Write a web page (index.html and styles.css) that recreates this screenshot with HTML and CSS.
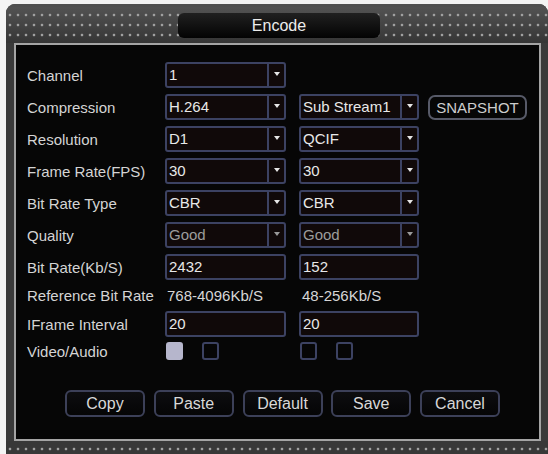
FILE: index.html
```html
<!DOCTYPE html>
<html>
<head>
<meta charset="utf-8">
<link rel="stylesheet" href="styles.css">
</head>
<body>
<div class="frame">
  <div class="header">
    <div class="tab">Encode</div>
  </div>
  <div class="panel">
    <div class="row">
      <div class="label">Channel</div>
      <div class="select c1"><span class="val">1</span><span class="arrow"></span></div>
    </div>
    <div class="row">
      <div class="label">Compression</div>
      <div class="select c1"><span class="val">H.264</span><span class="arrow"></span></div>
      <div class="select c2"><span class="val">Sub Stream1</span><span class="arrow"></span></div>
      <div class="snap">SNAPSHOT</div>
    </div>
    <div class="row">
      <div class="label">Resolution</div>
      <div class="select c1"><span class="val">D1</span><span class="arrow"></span></div>
      <div class="select c2"><span class="val">QCIF</span><span class="arrow"></span></div>
    </div>
    <div class="row">
      <div class="label">Frame Rate(FPS)</div>
      <div class="select c1"><span class="val">30</span><span class="arrow"></span></div>
      <div class="select c2"><span class="val">30</span><span class="arrow"></span></div>
    </div>
    <div class="row">
      <div class="label">Bit Rate Type</div>
      <div class="select c1"><span class="val">CBR</span><span class="arrow"></span></div>
      <div class="select c2"><span class="val">CBR</span><span class="arrow"></span></div>
    </div>
    <div class="row">
      <div class="label">Quality</div>
      <div class="select c1 disabled"><span class="val">Good</span><span class="arrow"></span></div>
      <div class="select c2 disabled"><span class="val">Good</span><span class="arrow"></span></div>
    </div>
    <div class="row">
      <div class="label">Bit Rate(Kb/S)</div>
      <div class="input c1">2432</div>
      <div class="input c2">152</div>
    </div>
    <div class="row ref">
      <div class="label">Reference Bit Rate</div>
      <div class="text c1">768-4096Kb/S</div>
      <div class="text c2">48-256Kb/S</div>
    </div>
    <div class="row">
      <div class="label">IFrame Interval</div>
      <div class="input c1">20</div>
      <div class="input c2">20</div>
    </div>
    <div class="row checks">
      <div class="label">Video/Audio</div>
      <div class="pair c1"><span class="cb on"></span><span class="cb"></span></div>
      <div class="pair c2"><span class="cb"></span><span class="cb"></span></div>
    </div>
    <div class="buttons">
      <div class="btn">Copy</div>
      <div class="btn">Paste</div>
      <div class="btn">Default</div>
      <div class="btn">Save</div>
      <div class="btn">Cancel</div>
    </div>
  </div>
  <div class="footer"></div>
</div>
</body>
</html>
```
FILE: styles.css
```css
html, body {
  margin: 0;
  padding: 0;
  background: #f4f4f4;
  font-family: "Liberation Sans", Arial, sans-serif;
}

.frame {
  margin: 4px 0 0 6px;
  width: 542px;
  height: 450px;
  box-sizing: border-box;
  background: #3a3a3a;
  border-radius: 9px 9px 0 0;
  padding: 0 7px 0 8px;
  display: flex;
  flex-direction: column;
  overflow: hidden;
}

.header {
  height: 39px;
  flex: none;
  margin: 0 -7px 0 -8px;
  display: flex;
  justify-content: center;
  align-items: flex-start;
  background:
    linear-gradient(#505050 0 3px, transparent 3px),
    radial-gradient(circle, #a0a0a0 1px, transparent 1.7px) 0 6px / 8px 10px,
    linear-gradient(#555555, #353535);
}

.tab {
  margin-top: 9px;
  margin-left: 4px;
  width: 202px;
  height: 25px;
  border-radius: 6px;
  background: linear-gradient(#202020, #030303);
  color: #ececec;
  font-size: 16px;
  line-height: 25px;
  text-align: center;
}

.panel {
  flex: 1;
  border: 2px solid #a4a4a4;
  background: #060606;
  padding: 17px 0 0 11px;
}

.footer {
  height: 13px;
  flex: none;
  margin: 0 -7px 0 -8px;
  background:
    radial-gradient(circle, #a0a0a0 1px, transparent 1.7px) 0 3px / 8px 10px,
    #383838;
}

.row {
  display: flex;
  align-items: center;
  height: 26px;
  margin-bottom: 6px;
}

.row.ref {
  height: 19px;
}

.row.checks {
  height: 18px;
  margin-top: -1px;
}

.label {
  width: 138px;
  flex: none;
  color: #d4d4d4;
  font-size: 15px;
  white-space: nowrap;
}

.c1 {
  width: 121px;
  flex: none;
}

.c2 {
  width: 120px;
  flex: none;
  margin-left: 13px;
}

.select, .input {
  height: 26px;
  box-sizing: border-box;
  border: 2px solid #3c4262;
  border-radius: 3px;
  background: #100909;
  color: #e8e8e8;
  font-size: 15px;
  display: flex;
}

.input {
  line-height: 22px;
  padding-left: 2px;
}

.select .val {
  flex: 1;
  line-height: 22px;
  padding-left: 2px;
  white-space: nowrap;
  overflow: hidden;
}

.select .arrow {
  width: 15px;
  flex: none;
  border-left: 2px solid #3c4262;
  display: flex;
  align-items: center;
  justify-content: center;
}

.select .arrow::after {
  content: "";
  border-left: 3.5px solid transparent;
  border-right: 3.5px solid transparent;
  border-top: 4px solid #e6e6e6;
  margin-top: -2px;
}

.select.disabled {
  color: #9c9c9c;
}

.select.disabled .arrow::after {
  border-top-color: #9a9a9a;
}

.text {
  color: #d6d6d6;
  font-size: 15px;
  padding-left: 2px;
  white-space: nowrap;
}

.text.c2 {
  padding-left: 1px;
}

.pair {
  display: flex;
  align-items: center;
  height: 18px;
}

.cb {
  width: 17px;
  height: 18px;
  box-sizing: border-box;
  border: 2px solid #3c4262;
  border-radius: 3px;
  margin-left: 19px;
}

.cb:first-child {
  margin-left: 1px;
}

.cb.on {
  background: #b6b6cc;
  border-color: #b6b6cc;
}

.snap {
  margin-left: 9px;
  width: 99px;
  height: 25px;
  box-sizing: border-box;
  border: 2px solid #575a68;
  border-radius: 7px;
  color: #cdcdcd;
  font-size: 15px;
  line-height: 21px;
  text-align: center;
}

.buttons {
  display: flex;
  gap: 8.75px;
  margin: 30px 0 0 38px;
}

.btn {
  width: 80px;
  height: 27px;
  box-sizing: border-box;
  border: 2px solid #3c4058;
  border-radius: 6px;
  background: linear-gradient(#0d0d10, #050505);
  color: #d8d8d8;
  font-size: 16px;
  line-height: 23px;
  text-align: center;
}
```
